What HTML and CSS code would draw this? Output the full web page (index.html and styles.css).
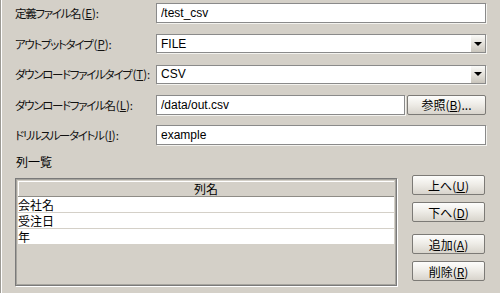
FILE: index.html
```html
<html>
<head>
  <meta charset="utf-8">
  <link rel="stylesheet" href="styles.css">
</head>
<body>
<div class="pane">
  <div class="form">
    <label class="lbl">定義ファイル名<span class="key">(<u>E</u>):</span></label>
    <input class="field" type="text" value="/test_csv">

    <label class="lbl">アウトプットタイプ<span class="key">(<u>P</u>):</span></label>
    <div class="combo">
      <span class="combo-text">FILE</span>
      <span class="combo-btn"><i class="tri"></i></span>
    </div>

    <label class="lbl">ダウンロードファイルタイプ<span class="key">(<u>T</u>):</span></label>
    <div class="combo">
      <span class="combo-text">CSV</span>
      <span class="combo-btn"><i class="tri"></i></span>
    </div>

    <label class="lbl">ダウンロードファイル名<span class="key">(<u>L</u>):</span></label>
    <div class="browse-row">
      <input class="field" type="text" value="/data/out.csv">
      <button class="btn browse">参照(<u>B</u>)...</button>
    </div>

    <label class="lbl">ドリルスルータイトル<span class="key">(<u>I</u>):</span></label>
    <input class="field" type="text" value="example">
  </div>

  <div class="section">列一覧</div>

  <div class="columns">
    <div class="grid">
      <div class="grid-head">列名</div>
      <div class="grid-row">会社名</div>
      <div class="grid-row">受注日</div>
      <div class="grid-row">年</div>
    </div>
    <div class="side">
      <button class="btn">上へ(<u>U</u>)</button>
      <button class="btn">下へ(<u>D</u>)</button>
      <button class="btn gap">追加(<u>A</u>)</button>
      <button class="btn">削除(<u>R</u>)</button>
    </div>
  </div>
</div>
</body>
</html>
```

FILE: styles.css
```css
html, body {
  margin: 0;
  padding: 0;
  background: #d4d0c8;
  color: #000;
  font: normal 12px "Noto Sans CJK JP", sans-serif;
  font-feature-settings: "palt";
}
.pane {
  height: 293px;
  box-sizing: border-box;
  border-left: 1px solid #9c9a94;
  box-shadow: inset 1px 0 0 #fff;
  padding: 3px 14px 0 14px;
}
.form {
  display: grid;
  grid-template-columns: 141px 1fr;
  grid-auto-rows: 20px;
  row-gap: 10.5px;
  align-items: center;
}
.lbl {
  font-size: 11.5px;
  letter-spacing: -1.3px;
  white-space: nowrap;
  line-height: 20px;
  color: #111;
}
.lbl .key {
  letter-spacing: 0;
  margin-left: 1px;
}
.field {
  box-sizing: border-box;
  height: 20px;
  width: 100%;
  margin: 0;
  padding: 0 4px;
  border: 1px solid #8a8a8a;
  box-shadow: 1px 1px 0 #f4f3ef;
  background: #fff;
  font: 12px "Liberation Sans", sans-serif;
  color: #000;
  outline: none;
}
.combo {
  position: relative;
  box-sizing: border-box;
  height: 19px;
  border: 1px solid #8a8a8a;
  box-shadow: 1px 1px 0 #f4f3ef;
  background: #fff;
  display: flex;
  align-items: center;
}
.combo-text {
  padding-left: 4px;
  font: 12px "Liberation Sans", sans-serif;
}
.combo-btn {
  position: absolute;
  right: 0;
  top: 0;
  bottom: 0;
  width: 14px;
  background: linear-gradient(#fafaf8, #e2dfd8 55%, #c9c5bc);
  display: flex;
  align-items: center;
  justify-content: center;
}
.tri {
  width: 0;
  height: 0;
  border-left: 4px solid transparent;
  border-right: 4px solid transparent;
  border-top: 4px solid #000;
}
.browse-row {
  display: flex;
  gap: 2px;
  height: 20px;
}
.browse-row .field {
  flex: 1;
}
.btn {
  box-sizing: border-box;
  margin: 0;
  padding: 0;
  border: 1px solid #7c7a76;
  border-radius: 2px;
  background: linear-gradient(#fdfdfc, #efede8 45%, #d8d4cc);
  font: 12px "Noto Sans CJK JP", sans-serif;
  font-feature-settings: "palt";
  color: #000;
  cursor: pointer;
}
.browse {
  width: 79px;
  height: 20px;
}
.section {
  margin-top: 9px;
  line-height: 16px;
  padding-left: 1px;
}
.columns {
  display: flex;
  gap: 15px;
  margin-top: 8px;
}
.grid {
  width: 382px;
  height: 108px;
  box-sizing: border-box;
  border: 1px solid #7a7a7a;
  box-shadow: inset 0 0 0 1px #a6a49e, 1px 1px 0 #fff;
  padding: 2px;
  background: #d4d0c8;
}
.grid-head {
  height: 15px;
  line-height: 15px;
  text-align: center;
  border-bottom: 1px solid #8e8c86;
  box-shadow: inset 1px 1px 0 #fff;
}
.grid-row {
  height: 15px;
  line-height: 15px;
  background: #fff;
  border-bottom: 1px solid #d4d0c8;
  padding-left: 0;
}
.side {
  display: flex;
  flex-direction: column;
  gap: 7px;
  margin-top: -3px;
}
.side .btn {
  width: 73px;
  height: 20px;
}
.side .gap {
  margin-top: 5px;
}
```
